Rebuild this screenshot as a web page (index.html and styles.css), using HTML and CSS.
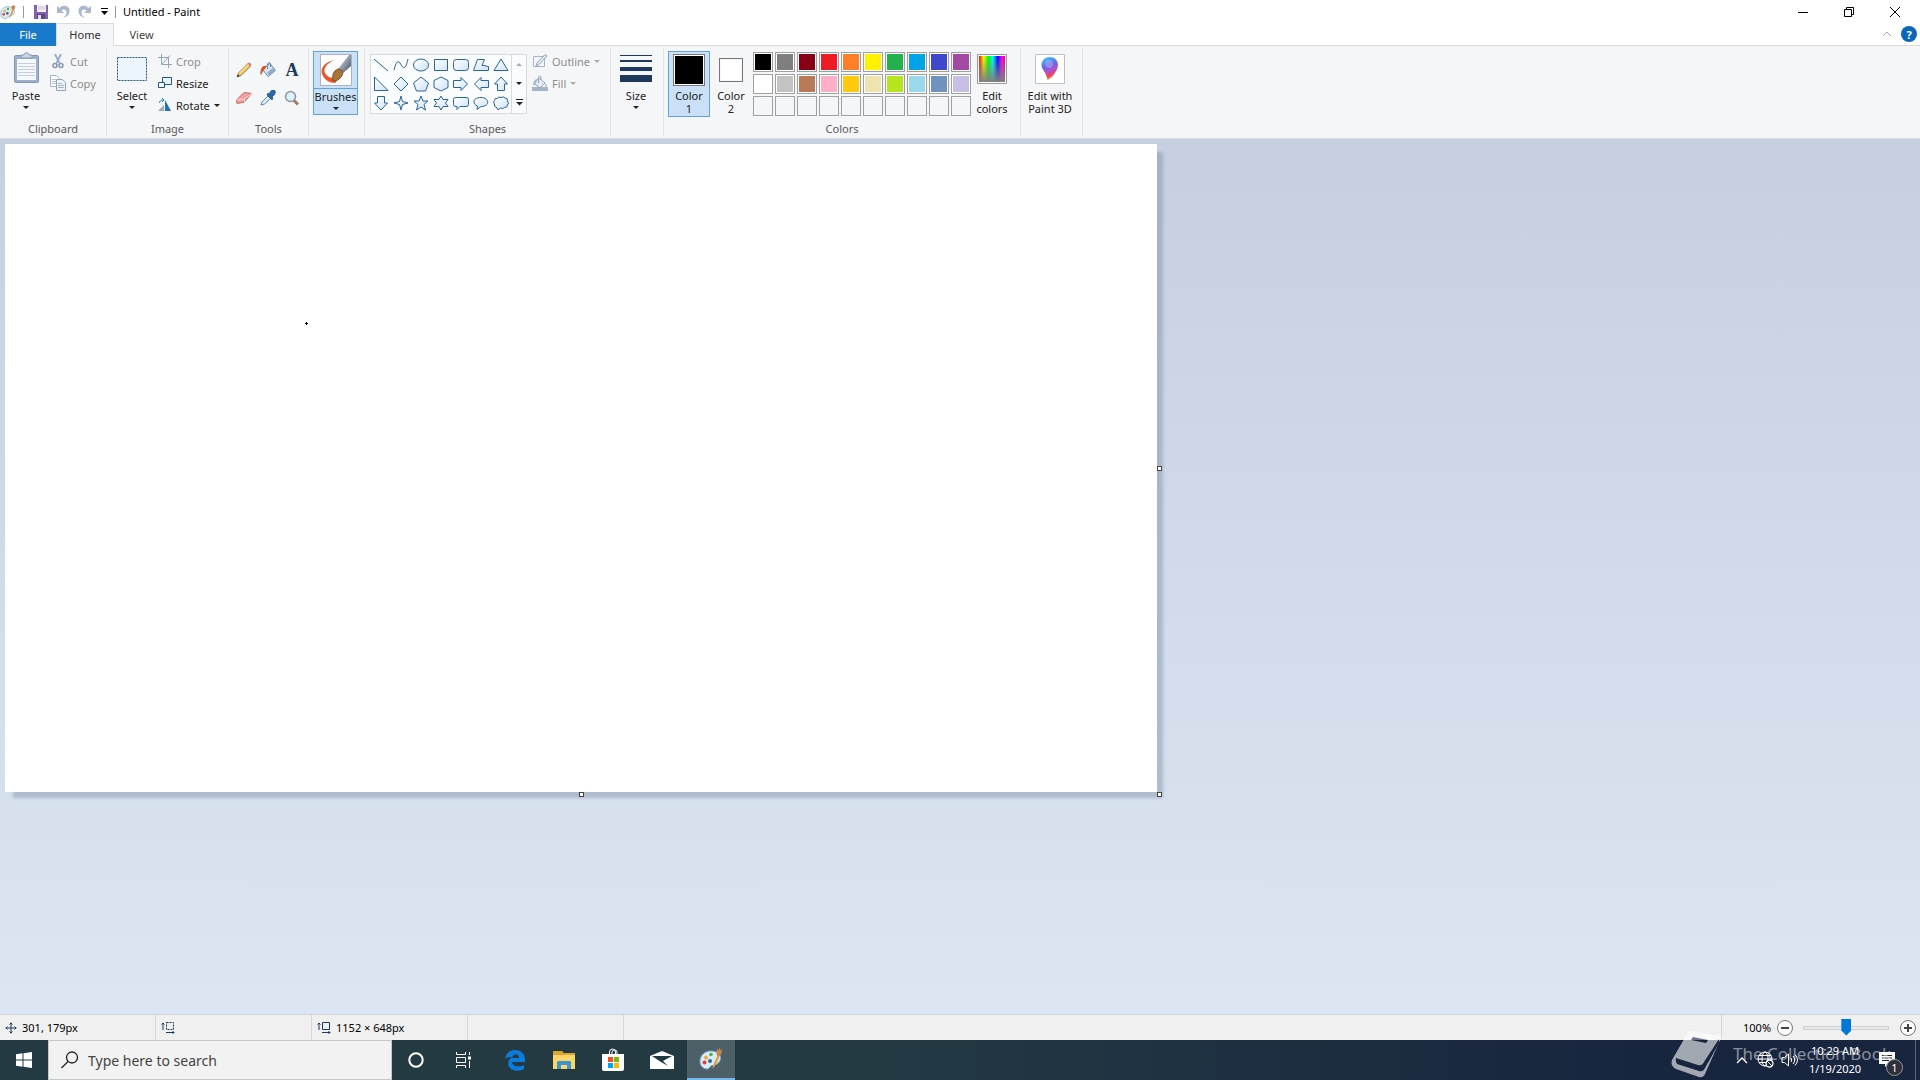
FILE: index.html
```
<!DOCTYPE html>
<html lang="en">
<head>
    <meta charset="UTF-8">
    <meta name="viewport" content="width=device-width, initial-scale=1.0">
    <title>Untitled - Paint</title>
    <link rel="stylesheet" href="styles.css">
</head>
<body>
    <!-- Shared gradients and symbols -->
    <svg class="defs" width="0" height="0" aria-hidden="true">
        <defs>
            <linearGradient id="shapeFill" x1="0" y1="0" x2="1" y2="1">
                <stop offset="0" stop-color="#ffffff"/>
                <stop offset="1" stop-color="#cfe4f7"/>
            </linearGradient>
            <linearGradient id="handle" x1="0" y1="0" x2="1" y2="1">
                <stop offset="0" stop-color="#e8edf3"/>
                <stop offset="1" stop-color="#38465c"/>
            </linearGradient>
            <linearGradient id="rainbow">
                <stop offset="0" stop-color="#f00"/>
                <stop offset=".18" stop-color="#ff0"/>
                <stop offset=".36" stop-color="#0f0"/>
                <stop offset=".54" stop-color="#0ff"/>
                <stop offset=".72" stop-color="#00f"/>
                <stop offset=".88" stop-color="#f0f"/>
                <stop offset="1" stop-color="#f04"/>
            </linearGradient>
            <linearGradient id="fadeGray" x2="0" y2="1">
                <stop offset="0" stop-color="#808080" stop-opacity="0"/>
                <stop offset="1" stop-color="#808080"/>
            </linearGradient>
            <linearGradient id="drop" x1=".3" y1="0" x2=".6" y2="1">
                <stop offset="0" stop-color="#3cc8f4"/>
                <stop offset=".35" stop-color="#5a6fe8"/>
                <stop offset=".6" stop-color="#b04fd0"/>
                <stop offset=".8" stop-color="#f0425a"/>
                <stop offset="1" stop-color="#ffb020"/>
            </linearGradient>
            <symbol id="palette" viewBox="0 0 24 24">
                <path d="M12 4C5 4 1 9 1 14.500c0 4 3 7.500 7 7.500 3 0 2.500-3 5-3.500 3-.5 8-1.500 8.500-7C22 7 18 4 12 4z" fill="#d9ecf8" stroke="#6fa6cc"/>
                <circle cx="5.500" cy="15.500" r="2" fill="#e3412f"/>
                <circle cx="7" cy="10.500" r="2" fill="#f2a43a"/>
                <circle cx="12" cy="7.500" r="1.800" fill="#52b043"/>
                <circle cx="11" cy="14" r="2" fill="#2b6da5"/>
                <path d="M13.500 22c0-3 4-11 5-14l2 1c-1 4-4 10-7 13z" fill="#ee9a44"/>
                <path d="M18 8.500c-1-2-.5-5 .5-7l1 2 1.500-3 .5 3 1.500-1c0 3-1 5-3 7z" fill="#c9854a"/>
            </symbol>
        </defs>
    </svg>

    <div class="window">
        <header class="title-bar">
            <svg class="app-icon" viewBox="0 0 24 24"><use href="#palette"/></svg>
            <span class="divider"></span>
            <button class="quick save" aria-label="Save">
                <svg width="16" height="16" viewBox="0 0 16 16"><path d="M1 1h14v14H1z" fill="#8660b0"/><path d="M4 1h9v7H4z" fill="#f4f1f8"/><path d="M5 3h7M5 5h7" stroke="#cfc3de"/><path d="M4 10h8v5H4z" fill="#5c4680"/><path d="M5 11h3v4H5z" fill="#e4dcef"/></svg>
            </button>
            <button class="quick" aria-label="Undo">
                <svg width="16" height="16" viewBox="0 0 16 16"><path d="M2 2v7h7L6.500 6.500C9 4.500 12 6 11.500 9c-.3 2-1.500 3.500-3.500 5 4-1 6.500-3.500 6.500-7C14.500 2 8.500 0 4.500 4z" fill="#a9b8cd"/></svg>
            </button>
            <button class="quick" aria-label="Redo">
                <svg width="16" height="16" viewBox="0 0 16 16"><path d="M14 2v7H7l2.500-2.500C7 4.500 4 6 4.500 9c.3 2 1.500 3.500 3.500 5-4-1-6.500-3.500-6.500-7C1.500 2 7.500 0 11.500 4z" fill="#a9b8cd"/></svg>
            </button>
            <button class="quick more" aria-label="Customize Quick Access Toolbar">
                <svg width="7" height="8" viewBox="0 0 7 8"><path d="M0 .5h7" stroke="#000"/><path d="M0 3h7L3.500 7z"/></svg>
            </button>
            <span class="divider"></span>
            <h1>Untitled - Paint</h1>
            <div class="window-buttons">
                <button aria-label="Minimize"><svg width="12" height="12"><path d="M1 6.500h10" stroke="#000"/></svg></button>
                <button aria-label="Restore Down"><svg width="12" height="12"><path d="M1.500 3.500h7v7h-7zM3.500 3V1.500h7v7H9" fill="none" stroke="#000"/></svg></button>
                <button aria-label="Close"><svg width="12" height="12"><path d="M1 1l10 10M11 1L1 11" stroke="#000"/></svg></button>
            </div>
        </header>

        <nav class="tabs">
            <button class="tab file">File</button>
            <button class="tab selected">Home</button>
            <button class="tab">View</button>
            <div class="tab-tools">
                <button aria-label="Minimize the Ribbon"><svg width="10" height="6"><path d="M1 5l4-4 4 4" fill="none" stroke="#a8a8a8"/></svg></button>
                <button class="help" aria-label="Help">?</button>
            </div>
        </nav>

        <section class="ribbon">
            <div class="group clipboard">
                <div class="group-body">
                    <button class="big">
                        <svg width="32" height="34" viewBox="0 0 32 34">
                            <rect x="4.500" y="4.500" width="24" height="27" rx="1.500" fill="#9db0ca" stroke="#8397b5"/>
                            <path d="M7 8h19v21H7z" fill="#f5f8fc"/>
                            <path d="M8 12.500h17M8 15.500h17M8 18.500h17M8 21.500h17M8 24.500h17" stroke="#c3cfdf"/>
                            <path d="M11 7V4h3c0-3 5-3 5 0h3v3z" fill="#cbd6e5" stroke="#8397b5"/>
                        </svg>
                        <span>Paste</span>
                        <i class="arrow"></i>
                    </button>
                    <div class="small-list">
                        <button disabled>
                            <svg width="16" height="16"><path d="M5 1l4.500 9M11 1L6.500 10" stroke="#9db0ca" stroke-width="2" fill="none"/><circle cx="5" cy="12.500" r="2" stroke="#8397b5" stroke-width="1.500" fill="none"/><circle cx="11" cy="12.500" r="2" stroke="#8397b5" stroke-width="1.500" fill="none"/></svg>
                            Cut
                        </button>
                        <button disabled>
                            <svg width="16" height="16"><path d="M.5.500h6l3 3v8h-9z" fill="#fff" stroke="#a3b4cb"/><path d="M2 4.500h4M2 6.500h5M2 8.500h5" stroke="#b9c6d8"/><path d="M6.500 4.500h6l3 3v8h-9z" fill="#eef3f9" stroke="#8fa3bf"/><path d="M8 8.500h4M8 10.500h6M8 12.500h6" stroke="#a3b4cb"/></svg>
                            Copy
                        </button>
                    </div>
                </div>
                <h2>Clipboard</h2>
            </div>

            <div class="group image">
                <div class="group-body">
                    <button class="big">
                        <svg width="32" height="34"><rect x="1.500" y="6.500" width="29" height="23" fill="#edf5fc" stroke="#1f5596" stroke-dasharray="2 1"/></svg>
                        <span>Select</span>
                        <i class="arrow"></i>
                    </button>
                    <div class="small-list">
                        <button disabled>
                            <svg width="14" height="14"><path d="M3.500 0v10.500H14M0 3.500h10.500V14M4 10l8-8.500" stroke="#8fa3bf" fill="none"/></svg>
                            Crop
                        </button>
                        <button>
                            <svg width="14" height="14"><path d="M4.500 1.500h9v7h-9z" fill="#edf5fc" stroke="#1f5596"/><path d="M.5 6.500h6v5h-6z" fill="#fff" stroke="#1f5596"/></svg>
                            Resize
                        </button>
                        <button>
                            <svg width="14" height="14"><path d="M6 13H0l6-6z" fill="#9aa8ba"/><path d="M7 13V2l6 11z" fill="#1f6fb8"/><path d="M1.500 5c0-2 1.500-3 3.500-3M4 0l2 2-2 2" stroke="#2a80c8" fill="none"/></svg>
                            Rotate
                            <i class="arrow"></i>
                        </button>
                    </div>
                </div>
                <h2>Image</h2>
            </div>

            <div class="group tools">
                <div class="group-body tool-grid">
                    <button aria-label="Pencil"><svg width="16" height="16"><path d="M1 15l1.500-4L12 1.500 14.500 4 5 13.500z" fill="#f5cd6a" stroke="#8d6b2e"/><path d="M3 11.500L12.500 2" stroke="#fff0b8"/><path d="M12 1.500L14.500 4l1-1.500L13.500.500z" fill="#dc7070"/><path d="M1 15l1-2.500L3.500 14z" fill="#333"/></svg></button>
                    <button aria-label="Fill with color"><svg width="16" height="16"><path d="M6 4.500l4-3 5.500 7L8 14.500 3 8z" fill="#d8e6f3" stroke="#6a88ab"/><path d="M8 12l6-5" stroke="#8eabc9" stroke-width="3"/><path d="M7.500 7V1.500q1.500-2 3 0V5" stroke="#6a88ab" fill="none"/><path d="M6 4C3 3 0 6 .5 13c2-1 1.500-4 5.500-7z" fill="#d9532c"/></svg></button>
                    <button class="text-tool" aria-label="Text">A</button>
                    <button aria-label="Eraser"><svg width="18" height="16"><path d="M1.500 10L9 2.500l7.500 1L9.500 12l-7.500 1.500z" fill="#f0a0a0" stroke="#c46666"/><path d="M1.500 10l8-1 7-5.500M9.500 9v3" stroke="#fbd0d0" fill="none"/></svg></button>
                    <button aria-label="Color picker"><svg width="16" height="16"><path d="M1 15l1-3 6-6 2.500 2.500L4.500 14z" fill="#e3f1fb" stroke="#5c87b0"/><path d="M7 5l5 5 1-2-1-1c4-3 4-6 2-7s-3 1-5 4L8 3z" fill="#2868a8" stroke="#194a7e" stroke-width=".7"/></svg></button>
                    <button aria-label="Magnifier"><svg width="16" height="16"><path d="M9.500 10l4.500 4.500" stroke="#a67a5b" stroke-width="3"/><circle cx="6.500" cy="6.500" r="5" fill="#e0f0fa" stroke="#8a98a8" stroke-width="1.500"/></svg></button>
                </div>
                <h2>Tools</h2>
            </div>

            <div class="group brush">
                <div class="group-body">
                    <button class="big pressed brushes">
                        <svg width="32" height="32">
                            <path d="M.5.500h31v31H.5z" fill="#fdfdfe" stroke="#aab4c0"/>
                            <path d="M14 6C5 8 0 14 2 20s8 9 13 9c2-1 2-4 1-6-4 2-9 0-11-4s1-9 9-13z" fill="#ea552b"/>
                            <path d="M18 15L29 1h2v11l-9 8z" fill="url(#handle)"/>
                            <path d="M13 27c-1-5 0-10 5-12 5 0 6 5 3 8-2 3-5 4-8 4z" fill="#a87438" stroke="#7b5228"/>
                        </svg>
                        <span>Brushes</span>
                        <i class="arrow"></i>
                    </button>
                </div>
            </div>

            <div class="group shapes">
                <div class="group-body">
                    <div class="gallery">
                        <div class="shape-grid">
                            <button aria-label="Line"><svg viewBox="0 0 16 16"><path d="M1 2l14 12"/></svg></button>
                            <button aria-label="Curve"><svg viewBox="0 0 16 16"><path class="open" d="M1 13C3 5 5 3 7 6s3 6 5 4 2-5 3-8"/></svg></button>
                            <button aria-label="Oval"><svg viewBox="0 0 16 16"><ellipse cx="8" cy="8" rx="7.500" ry="6"/></svg></button>
                            <button aria-label="Rectangle"><svg viewBox="0 0 16 16"><path d="M1.500 2.500h13v11h-13z"/></svg></button>
                            <button aria-label="Rounded rectangle"><svg viewBox="0 0 16 16"><rect x=".5" y="2.500" width="15" height="11" rx="3"/></svg></button>
                            <button aria-label="Polygon"><svg viewBox="0 0 16 16"><path d="M.5 13.500l4-11h7L9 8.500h2l4.500 1v4z"/></svg></button>
                            <button aria-label="Triangle"><svg viewBox="0 0 16 16"><path d="M8 2l7 11.500H1z"/></svg></button>
                            <button aria-label="Right triangle"><svg viewBox="0 0 16 16"><path d="M1.500 1v13.500H15z"/></svg></button>
                            <button aria-label="Diamond"><svg viewBox="0 0 16 16"><path d="M8 1l7 7-7 7-7-7z"/></svg></button>
                            <button aria-label="Pentagon"><svg viewBox="0 0 16 16"><path d="M8 1l7.500 6-3 8h-9l-3-8z"/></svg></button>
                            <button aria-label="Hexagon"><svg viewBox="0 0 16 16"><path d="M8 1l7 3.500v7L8 15l-7-3.500v-7z"/></svg></button>
                            <button aria-label="Right arrow"><svg viewBox="0 0 16 16"><path d="M.5 4.500H8v-3L14.500 8 8 14.500v-3H.5z"/></svg></button>
                            <button aria-label="Left arrow"><svg viewBox="0 0 16 16"><path d="M15.500 4.500H8v-3L1.500 8 8 14.500v-3h7.500z"/></svg></button>
                            <button aria-label="Up arrow"><svg viewBox="0 0 16 16"><path d="M4.500 14.500V8h-3L8 1l6.500 7h-3v6.500z"/></svg></button>
                            <button aria-label="Down arrow"><svg viewBox="0 0 16 16"><path d="M4.500 1.500V8h-3L8 15l6.500-7h-3V1.500z"/></svg></button>
                            <button aria-label="Four-point star"><svg viewBox="0 0 16 16"><path d="M8 1l1.500 5.500L15 8 9.500 9.500 8 15 6.500 9.500 1 8l5.500-1.500z"/></svg></button>
                            <button aria-label="Five-point star"><svg viewBox="0 0 16 16"><path d="M8 1l2 5h5l-4 3.500 1.500 5.500L8 12l-4.500 3L5 9.500 1 6h5z"/></svg></button>
                            <button aria-label="Six-point star"><svg viewBox="0 0 16 16"><path d="M8 1l2 3.500h5L12.500 8l2.500 3.500h-5L8 15l-2-3.500H1L3.500 8 1 4.500h5z"/></svg></button>
                            <button aria-label="Rounded rectangular callout"><svg viewBox="0 0 16 16"><path d="M3 2.500h10q2.500 0 2.500 2v5q0 2-2.500 2H7l-3 3v-3H3q-2.500 0-2.500-2v-5q0-2 2.500-2z"/></svg></button>
                            <button aria-label="Oval callout"><svg viewBox="0 0 16 16"><path d="M4 14.500l.5-3.500C-1 9-.5 2.500 8 2.500s9.500 9 0 9L4 14.500z"/></svg></button>
                            <button aria-label="Cloud callout"><svg viewBox="0 0 16 16"><path d="M3 12Q.5 11.500 1.500 9-.5 7 1.500 5.500 1.500 3 4 3.500 6 1 8 2.500q2.500-1.500 4 .5 3 0 2.500 3 2 2 0 4 0 2.500-3 2.500-1.500 2-4 .5l-2.500 2-1-2z"/></svg></button>
                        </div>
                        <div class="gallery-scroll">
                            <button disabled aria-label="Row up"><i class="arrow up"></i></button>
                            <button aria-label="Row down"><i class="arrow"></i></button>
                            <button aria-label="More shapes"><svg width="7" height="7"><path d="M0 .5h7" stroke="#222"/><path d="M0 3h7L3.500 6.500z" fill="#222"/></svg></button>
                        </div>
                    </div>
                    <div class="small-list">
                        <button disabled>
                            <svg width="16" height="16"><path d="M1.500 3.500h11v10h-11z" fill="none" stroke="#a3b4cb"/><path d="M4 13l1-3 8-8.500L15 3l-8 8.500z" fill="#e6ebf2" stroke="#8fa3bf"/></svg>
                            Outline
                            <i class="arrow"></i>
                        </button>
                        <button disabled>
                            <svg width="16" height="16"><path d="M0 12h16v4H0z" fill="#a3b4cb"/><path d="M7 3l6 5-5 5-6-4.500z" fill="#e6ebf2" stroke="#8fa3bf"/><path d="M6.500 8V2q1-2 2.500 0v3" fill="none" stroke="#8fa3bf"/><path d="M5 4Q1 5 1 11l3-3zM13 8v4l2-1z" fill="#a3b4cb"/></svg>
                            Fill
                            <i class="arrow"></i>
                        </button>
                    </div>
                </div>
                <h2>Shapes</h2>
            </div>

            <div class="group size">
                <div class="group-body">
                    <button class="big">
                        <svg width="32" height="34"><path d="M0 4h32v1H0zM0 9h32v2H0zM0 16h32v4H0zM0 24h32v7H0z" fill="#1e395b"/></svg>
                        <span>Size</span>
                        <i class="arrow"></i>
                    </button>
                </div>
            </div>

            <div class="group colors">
                <div class="group-body">
                    <button class="big pressed color-one">
                        <b class="current black"></b>
                        <span>Color<br>1</span>
                    </button>
                    <button class="big color-two">
                        <b class="current white"></b>
                        <span>Color<br>2</span>
                    </button>
                    <div class="palette" id="palette-grid"></div>
                    <button class="big edit">
                        <svg width="30" height="34"><path d="M.5 3.500h29v29H.5z" fill="#fff" stroke="#999"/><path d="M2 5h26v26H2z" fill="url(#rainbow)"/><path d="M2 5h26v26H2z" fill="url(#fadeGray)"/></svg>
                        <span>Edit<br>colors</span>
                    </button>
                </div>
                <h2>Colors</h2>
            </div>

            <div class="group paint3d">
                <div class="group-body">
                    <button class="big">
                        <svg width="30" height="34"><path d="M.5 3.500h29v29H.5z" fill="#fff" stroke="#c0c0c0"/><path d="M15 6c-5 0-8.500 3.500-8.500 8 0 5 5 7 6 15 3-1 10.500-9 10.500-15 0-4.500-3.500-8-8-8z" fill="url(#drop)"/><circle cx="14" cy="13" r="4" fill="#c9a3ff" opacity=".5"/></svg>
                        <span>Edit with<br>Paint 3D</span>
                    </button>
                </div>
            </div>
        </section>

        <main class="workspace">
            <div class="sheet">
                <svg class="drawing" width="1152" height="648" role="img" aria-label="Drawing canvas"><path d="M300 179h3v1h-3zM301 178h1v3h-1z"/></svg>
                <span class="grip right"></span>
                <span class="grip bottom"></span>
                <span class="grip corner"></span>
            </div>
        </main>

        <footer class="status-bar">
            <div class="cell">
                <svg width="12" height="12"><path d="M6 .5v11M.5 6h11M4.500 2.500L6 1l1.500 1.500M4.500 9.500L6 11l1.500-1.500M2.500 4.500L1 6l1.500 1.500M9.500 4.500L11 6 9.500 7.500" stroke="#1e395b" fill="none"/></svg>
                301, 179px
            </div>
            <div class="cell">
                <svg width="14" height="14"><path d="M2 2v7M.5 3.500L2 2l1.500 1.500M5 11.500h8M11.500 10l1.500 1.500-1.500 1.500" stroke="#1e395b" fill="none"/><path d="M5.500 1.500h7v7h-7z" fill="none" stroke="#1e395b" stroke-dasharray="2 1"/></svg>
            </div>
            <div class="cell">
                <svg width="14" height="14"><path d="M2 2v7M.5 3.500L2 2l1.500 1.500M5 11.500h8M11.500 10l1.500 1.500-1.500 1.500M5.500 1.500h7v7h-7z" stroke="#1e395b" fill="none"/></svg>
                1152 × 648px
            </div>
            <div class="cell"></div>
            <div class="zoom">
                <label for="zoom">100%</label>
                <button aria-label="Zoom out"><svg width="18" height="18"><circle cx="9" cy="9" r="7.500" fill="#fafafa" stroke="#777"/><path d="M5 9h8" stroke="#444" stroke-width="2"/></svg></button>
                <input type="range" id="zoom" min="0" max="10" value="5">
                <button aria-label="Zoom in"><svg width="18" height="18"><circle cx="9" cy="9" r="7.500" fill="#fafafa" stroke="#777"/><path d="M5 9h8M9 5v8" stroke="#444" stroke-width="2"/></svg></button>
            </div>
        </footer>
    </div>

    <div class="taskbar">
        <button class="task start" aria-label="Start">
            <svg width="16" height="16"><path d="M0 2.200L6.500 1.300v6.200H0zM7.500 1.200L16 0v7.500H7.500zM0 8.500h6.500v6.200L0 13.800zM7.500 8.500H16V16l-8.500-1.200z" fill="#fff"/></svg>
        </button>
        <label class="search">
            <svg width="18" height="18"><circle cx="11" cy="6.500" r="5.500" fill="none" stroke="#222" stroke-width="1.300"/><path d="M7 10.500L.5 17" stroke="#222" stroke-width="1.300"/></svg>
            <input type="text" placeholder="Type here to search" aria-label="Type here to search">
        </label>
        <div class="task-buttons">
            <button class="task" aria-label="Cortana"><svg width="16" height="16"><circle cx="8" cy="8" r="6.700" fill="none" stroke="#fff" stroke-width="2"/></svg></button>
            <button class="task view" aria-label="Task View"><svg width="18" height="16"><path d="M1.500 0v2.500h9V0M1.500 5.500h9v5h-9zM1.500 16v-2.500h9V16M14.500 0v3M14.500 9v7" fill="none" stroke="#fff"/><path d="M13 4.500h3v3h-3z" fill="#fff"/></svg></button>
            <button class="task" aria-label="Microsoft Edge"><svg width="22" height="22" viewBox="0 0 22 22"><path d="M1 10C2 4 6 1 11 1c6 0 10 4 10 9.500V13H8c0 4 7 6 12 3v4c-3 1.500-6 2-9 1.500C3 20 2 12 8 8c-3 0-5 0-7 2zm7-1h7c0-5-6-5-7 0z" fill="#0b7bdc"/></svg></button>
            <button class="task" aria-label="File Explorer"><svg width="22" height="20"><path d="M0 1h9l2 2h11v16H0z" fill="#e0a52e"/><path d="M0 5h22v14H0z" fill="#fbd768"/><path d="M4 19v-7q0-1 1-1h12q1 0 1 1v7h-4v-4H8v4z" fill="#3f93cf"/></svg></button>
            <button class="task" aria-label="Microsoft Store"><svg width="24" height="24"><path d="M8.500 7V4q0-3 3-3t3 3v3M11 7V4q0-2 2.500-2T16 4v3" fill="none" stroke="#fff"/><path d="M1 6h22v15q0 2-2 2H3q-2 0-2-2z" fill="#fff"/><path d="M7 9h5v5H7z" fill="#f25022"/><path d="M13 9h5v5h-5z" fill="#7fba00"/><path d="M7 15h5v5H7z" fill="#00a4ef"/><path d="M13 15h5v5h-5z" fill="#ffb900"/></svg></button>
            <button class="task" aria-label="Mail"><svg width="24" height="20"><path d="M0 6l12-5 12 5v13H0z" fill="#fff"/><path d="M2 6h20l-9 5 5 5-7-4z" fill="#213840"/></svg></button>
            <button class="task active" aria-label="Untitled - Paint"><svg width="24" height="24" viewBox="0 0 24 24"><use href="#palette"/></svg></button>
        </div>
        <div class="tray">
            <button aria-label="Show hidden icons"><svg width="12" height="8"><path d="M1 7l5-5 5 5" fill="none" stroke="#fff" stroke-width="1.300"/></svg></button>
            <button aria-label="Network"><svg width="18" height="18"><g fill="none" stroke="#fff"><circle cx="8" cy="8" r="7"/><ellipse cx="8" cy="8" rx="3" ry="7"/><path d="M1 8h14M2 4.500h12M2 11.500h12"/></g><circle cx="12.500" cy="12.500" r="3.500" fill="#18253f" stroke="#fff" stroke-width="1.300"/><path d="M10 10l5 5" stroke="#fff"/></svg></button>
            <button aria-label="Volume"><svg width="18" height="14"><path d="M1 4.500h2.500l4-3.500v12l-4-3.500H1z" fill="none" stroke="#fff"/><path d="M10 5q1.500 2 0 4M12 3q3.500 4 0 8M14 1.500q5 5.500 0 11" fill="none" stroke="#fff"/></svg></button>
            <button class="clock"><time>10:29 AM</time><span>1/19/2020</span></button>
            <button class="notices" aria-label="Notifications">
                <svg width="16" height="16"><path d="M0 0h16v12h-7l-3 3v-3H0z" fill="#fff"/><path d="M3 3.500h10M3 6h10M3 8.500h7" stroke="#18253f"/></svg>
                <span class="badge">1</span>
            </button>
            <span class="show-desktop"></span>
        </div>
        <div class="watermark">
            <svg width="52" height="48"><path d="M20 1l30 5q1 0 0 2L34 44q-2 4-6 3L5 39q-6-3-4-9L16 4q1-4 4-3z" fill="#fff"/><path d="M5 28l22 7q4 1 6-3L48 9v4L34 38q-2 4-6 3L6 34q-2-3-1-6z" fill="#18253f"/><path d="M22 7l15 3-2 3-15-3z" fill="#18253f"/></svg>
            <span>The Collection Book</span>
        </div>
    </div>

    <script>
        // last row holds the empty custom colors
        const colors = [
            '#000000', '#7f7f7f', '#880015', '#ed1c24', '#ff7f27', '#fff200', '#22b14c', '#00a2e8', '#3f48cc', '#a349a4',
            '#ffffff', '#c3c3c3', '#b97a57', '#ffaec9', '#ffc90e', '#efe4b0', '#b5e61d', '#99d9ea', '#7092be', '#c8bfe7',
            '', '', '', '', '', '', '', '', '', ''
        ];
        const grid = document.getElementById('palette-grid');
        colors.forEach(color => {
            const swatch = document.createElement('button');
            swatch.className = color ? 'swatch' : 'swatch empty';
            swatch.setAttribute('aria-label', color || 'Custom color');
            if (color) swatch.style.backgroundColor = color;
            grid.appendChild(swatch);
        });
    </script>
</body>
</html>
```
FILE: styles.css
```
* {
    box-sizing: border-box;
}
body {
    margin: 0;
    height: 100vh;
    display: flex;
    flex-direction: column;
    overflow: hidden;
    font-family: "Noto Sans", "Open Sans", sans-serif;
    font-size: 11px;
    color: #222;
    background-color: #fff;
}
button {
    font: inherit;
    color: inherit;
    background: none;
    border: none;
    padding: 0;
    display: flex;
    align-items: center;
    justify-content: center;
}
h1, h2 {
    margin: 0;
    font-size: 11px;
    font-weight: normal;
}
svg {
    display: block;
    flex: none;
}
.defs {
    position: absolute;
}
.window {
    flex: 1;
    min-height: 0;
    display: flex;
    flex-direction: column;
}

/* Title bar */
.title-bar {
    height: 23px;
    display: flex;
    align-items: center;
}
.app-icon {
    width: 16px;
    height: 16px;
    margin-right: 7px;
}
.divider {
    width: 1px;
    height: 12px;
    background-color: #999;
}
.quick {
    width: 22px;
    height: 22px;
}
.quick.save {
    margin-left: 6px;
}
.quick.more {
    width: 16px;
    margin-right: 3px;
}
.title-bar h1 {
    color: #000;
    margin-left: 7px;
}
.window-buttons {
    margin-left: auto;
    margin-right: 2px;
    display: flex;
}
.window-buttons button {
    width: 46px;
    height: 20px;
}

/* Tabs */
.tabs {
    height: 23px;
    display: flex;
    border-bottom: 1px solid #dadbdc;
}
.tab {
    width: 55px;
    height: 23px;
    padding-bottom: 1px;
    color: #444;
}
.tab.file {
    width: 56px;
    background-color: #1979ca;
    color: #fff;
}
.tab.selected {
    width: 58px;
    background-color: #f5f6f7;
    border: 1px solid #dadbdc;
    border-bottom: none;
    color: #333;
}
.tab-tools {
    margin-left: auto;
    margin-right: 3px;
    display: flex;
    align-items: center;
    gap: 9px;
}
.help {
    width: 16px;
    height: 16px;
    border-radius: 50%;
    background-color: #0c66b8;
    color: #fff;
    font-weight: bold;
}

/* Ribbon */
.ribbon {
    height: 93px;
    padding: 2px 0;
    display: flex;
    background-color: #f5f6f7;
    border-bottom: 1px solid #d5dae3;
}
.group {
    display: flex;
    flex-direction: column;
    border-right: 1px solid #e2e3e4;
}
.group-body {
    flex: 1;
    display: flex;
    align-items: flex-start;
    padding-top: 3px;
}
.group h2 {
    height: 15px;
    line-height: 15px;
    text-align: center;
    color: #5a5a5a;
}
.clipboard { width: 107px; }
.image { width: 122px; }
.tools { width: 80px; }
.brush { width: 56px; }
.shapes { width: 246px; }
.size { width: 53px; }
.colors { width: 357px; }
.paint3d { width: 62px; }
.big {
    width: 42px;
    flex-direction: column;
    justify-content: flex-start;
    line-height: 13px;
}
.big span {
    margin-top: 4px;
}
.arrow {
    border: 3px solid transparent;
    border-top-color: #222;
    border-bottom: none;
}
.arrow.up {
    border-top: none;
    border-bottom: 3px solid #aaa;
}
.big .arrow {
    margin-top: 4px;
}
button:disabled {
    color: #8d8d8d;
}
button:disabled .arrow:not(.up) {
    border-top-color: #aaa;
}
.small-list button {
    height: 22px;
    padding-bottom: 2px;
    gap: 4px;
}
.clipboard .big {
    margin: 0 3px 0 5px;
}
.image .big {
    margin: 0 5px 0 4px;
}
.group-body.tool-grid {
    display: grid;
    grid-template-columns: repeat(3, 24px);
    grid-auto-rows: 28px;
    align-content: start;
    align-items: center;
    padding: 8px 3px 0;
}
.text-tool {
    font-family: "Liberation Serif", serif;
    font-size: 18px;
    font-weight: bold;
    color: #1e395b;
}
.pressed {
    background-color: #c9e0f7;
    outline: 1px solid #62a2e4;
    outline-offset: -1px;
}
.brushes {
    width: 45px;
    height: 64px;
    margin-left: 4px;
    padding-top: 3px;
}
.brushes span {
    margin-top: 2px;
    padding-top: 1px;
    width: 45px;
    border-top: 1px solid #62a2e4;
}

/* Shape gallery */
.gallery {
    display: flex;
    width: 157px;
    height: 60px;
    margin: 3px 5px 0;
    border: 1px solid #dadbdc;
    background-color: #fbfcfd;
}
.shape-grid {
    flex: 1;
    display: grid;
    grid-template-columns: repeat(7, 20px);
    grid-auto-rows: 19px;
}
.shape-grid svg {
    width: 16px;
    height: 16px;
    fill: url(#shapeFill);
    stroke: #2a639e;
}
.shape-grid .open {
    fill: none;
}
.gallery-scroll {
    width: 15px;
    border-left: 1px solid #dadbdc;
    display: grid;
    grid-auto-rows: 19px;
}
.size .big {
    margin-left: 4px;
}

/* Colors */
.color-one {
    height: 66px;
    margin-left: 4px;
    padding-top: 3px;
}
.color-two {
    margin: 0 1px 0 0;
    padding-top: 7px;
}
.current {
    width: 32px;
    height: 32px;
    border: 1px solid #777;
    background-clip: content-box;
    padding: 1px;
}
.current.black {
    background-color: #000;
    box-shadow: inset 0 0 0 1px #fff;
}
.current.white {
    width: 24px;
    height: 24px;
    background-color: #fff;
    margin-bottom: 4px;
}
.color-one span, .color-two span {
    margin-top: 3px;
}
.palette {
    display: grid;
    grid-template-columns: repeat(10, 20px);
    grid-auto-rows: 20px;
    gap: 2px;
    margin: 1px 0 0;
}
.swatch {
    border: 1px solid #a0a0a0;
    box-shadow: inset 0 0 0 1px #fff;
}
.swatch.empty {
    box-shadow: none;
}
.paint3d .big {
    width: 58px;
}

/* Workspace */
.workspace {
    flex: 1;
    min-height: 0;
    padding: 5px;
    background-image: linear-gradient(#c6cfe0, #dce6f2);
}
.sheet {
    position: relative;
    width: fit-content;
    background-color: #fff;
    box-shadow: 7px 7px 3px -1px rgba(100, 120, 150, 0.35);
}
.grip {
    position: absolute;
    width: 5px;
    height: 5px;
    border: 1px solid #444;
    background-color: #fff;
}
.grip.right {
    right: -5px;
    top: calc(50% - 2px);
}
.grip.bottom {
    left: calc(50% - 2px);
    bottom: -5px;
}
.grip.corner {
    right: -5px;
    bottom: -5px;
}

/* Status bar */
.status-bar {
    height: 26px;
    display: flex;
    background-color: #f0f0f0;
    border-top: 1px solid #d0d5dc;
    color: #000;
}
.cell {
    width: 156px;
    padding-left: 5px;
    display: flex;
    align-items: center;
    gap: 5px;
    border-right: 1px solid #d7d7d7;
}
.zoom {
    margin-left: auto;
    width: 199px;
    padding: 0 3px 0 21px;
    border-left: 1px solid #d7d7d7;
    display: flex;
    align-items: center;
    justify-content: space-between;
}
.zoom input {
    width: 86px;
    height: 17px;
    margin: 0 5px;
    background: none;
    appearance: none;
}
.zoom input::-webkit-slider-runnable-track {
    height: 4px;
    background-color: #e7eaea;
    border: 1px solid #d0d0d0;
}
.zoom input::-webkit-slider-thumb {
    appearance: none;
    width: 10px;
    height: 17px;
    margin-top: -8px;
    background-color: #0078d7;
    clip-path: polygon(0 0, 100% 0, 100% 70%, 50% 100%, 0 70%);
}

/* Taskbar */
.taskbar {
    position: relative;
    height: 40px;
    display: flex;
    background-image: linear-gradient(to right, #233a43 45%, #18253f 85%);
    color: #fff;
}
.task {
    width: 48px;
    height: 40px;
}
.search {
    width: 344px;
    padding-left: 12px;
    display: flex;
    align-items: center;
    gap: 9px;
    background-color: #f2f2f2;
    border: 1px solid #c4c8ca;
}
.search input {
    flex: 1;
    border: none;
    background: none;
    padding: 0;
    font: inherit;
    font-size: 14px;
}
.search input::placeholder {
    color: #444;
}
.task-buttons {
    display: flex;
    gap: 1px;
}
.task.view {
    margin: 0 2px 0 -1px;
}
.task.active {
    background-color: #4d6068;
    border-bottom: 2px solid #76b9ed;
}
.tray {
    margin-left: auto;
    display: flex;
}
.tray button {
    width: 24px;
}
.tray .clock {
    width: 66px;
    flex-direction: column;
    line-height: 18px;
}
.tray .notices {
    position: relative;
    width: 38px;
    margin-right: 9px;
}
.badge {
    position: absolute;
    right: 3px;
    bottom: 4px;
    width: 17px;
    height: 17px;
    line-height: 15px;
    border: 1px solid #999;
    border-radius: 50%;
    background-color: #2d3038;
}
.show-desktop {
    width: 5px;
    border-left: 1px solid #5a6478;
}
.watermark {
    position: absolute;
    right: 29px;
    bottom: 2px;
    display: flex;
    align-items: center;
    gap: 10px;
    font-size: 17px;
    opacity: 0.6;
    pointer-events: none;
}
.watermark span {
    padding-bottom: 2px;
    opacity: 0.8;
}
```
